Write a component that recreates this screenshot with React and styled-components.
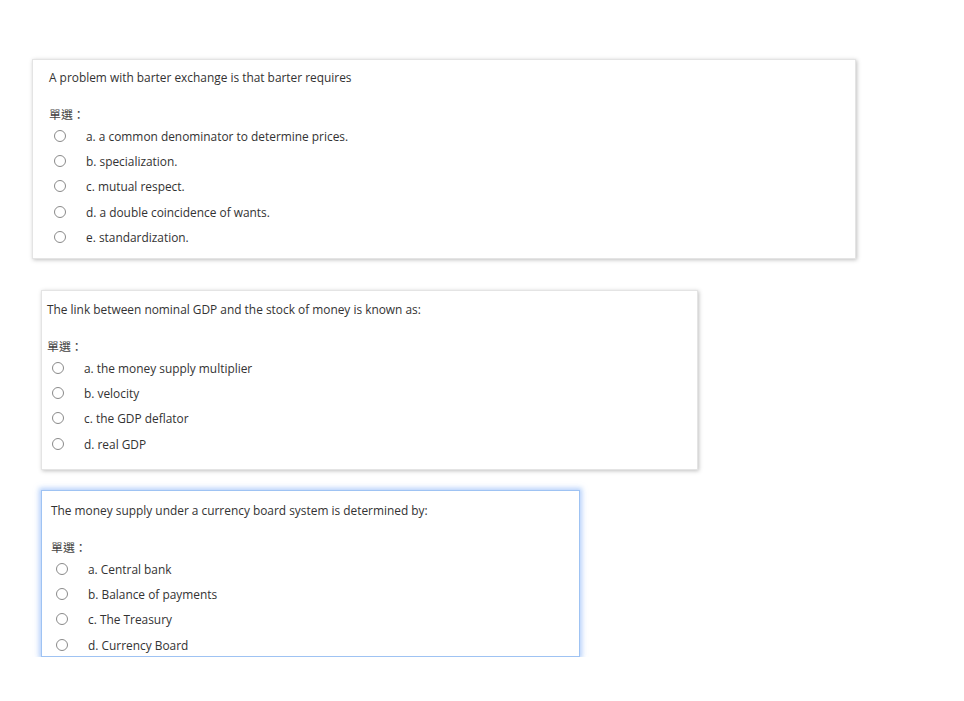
import React from "react";
import styled, { createGlobalStyle } from "styled-components";

const GlobalStyle = createGlobalStyle`
  body {
    margin: 0;
    background: #fff;
    font-family: 'Open Sans', 'Noto Sans CJK TC', sans-serif;
    color: #333;
  }
`;

const Page = styled.div`
  display: flex;
  flex-direction: column;
  align-items: flex-start;
  padding-top: 59px;
`;

const Card = styled.div`
  box-sizing: border-box;
  width: ${(p) => p.$w}px;
  height: ${(p) => p.$h}px;
  margin-left: ${(p) => p.$left}px;
  margin-top: ${(p) => p.$top || 0}px;
  padding: ${(p) => p.$pt}px 10px 0 ${(p) => p.$pl}px;
  background: #fff;
  overflow: hidden;
  border: 1px solid ${(p) => (p.$active ? "#9fc3f3" : "#e4e4e4")};
  box-shadow: ${(p) =>
    p.$active
      ? "0 0 5px 2px rgba(120, 170, 245, 0.55)"
      : "1px 1px 4px rgba(0, 0, 0, 0.25)"};
`;

const Question = styled.p`
  margin: 0 0 19px;
  font-size: 11.9px;
  line-height: 18px;
`;

const Label = styled.div`
  font-size: 11.9px;
  line-height: 18px;
  color: #444;
`;

const Row = styled.label`
  display: flex;
  align-items: center;
  height: 25.4px;
  padding-left: 5px;
  font-size: 11.9px;
`;

const Radio = styled.span`
  box-sizing: border-box;
  width: 12px;
  height: 12px;
  border-radius: 50%;
  border: 1px solid #8a8a8a;
  margin-right: 20px;
  flex-shrink: 0;
`;

const quizzes = [
  {
    q: "A problem with barter exchange is that barter requires",
    opts: [
      "a. a common denominator to determine prices.",
      "b. specialization.",
      "c. mutual respect.",
      "d. a double coincidence of wants.",
      "e. standardization.",
    ],
    w: 824, h: 200, left: 32, top: 0, pt: 8, pl: 16,
  },
  {
    q: "The link between nominal GDP and the stock of money is known as:",
    opts: [
      "a. the money supply multiplier",
      "b. velocity",
      "c. the GDP deflator",
      "d. real GDP",
    ],
    w: 657, h: 180, left: 41, top: 31, pt: 9, pl: 5,
  },
  {
    q: "The money supply under a currency board system is determined by:",
    opts: [
      "a. Central bank",
      "b. Balance of payments",
      "c. The Treasury",
      "d. Currency Board",
    ],
    w: 539, h: 167, left: 41, top: 20, pt: 10, pl: 9, active: true,
  },
];

function App() {
  return (
    <>
      <GlobalStyle />
      <Page>
        {quizzes.map((z, i) => (
          <Card
            key={i}
            $w={z.w}
            $h={z.h}
            $left={z.left}
            $top={z.top}
            $pt={z.pt}
            $pl={z.pl}
            $active={z.active}
          >
            <Question>{z.q}</Question>
            <Label>單選：</Label>
            {z.opts.map((o) => (
              <Row key={o}>
                <Radio />
                {o}
              </Row>
            ))}
          </Card>
        ))}
      </Page>
    </>
  );
}

export default App;
